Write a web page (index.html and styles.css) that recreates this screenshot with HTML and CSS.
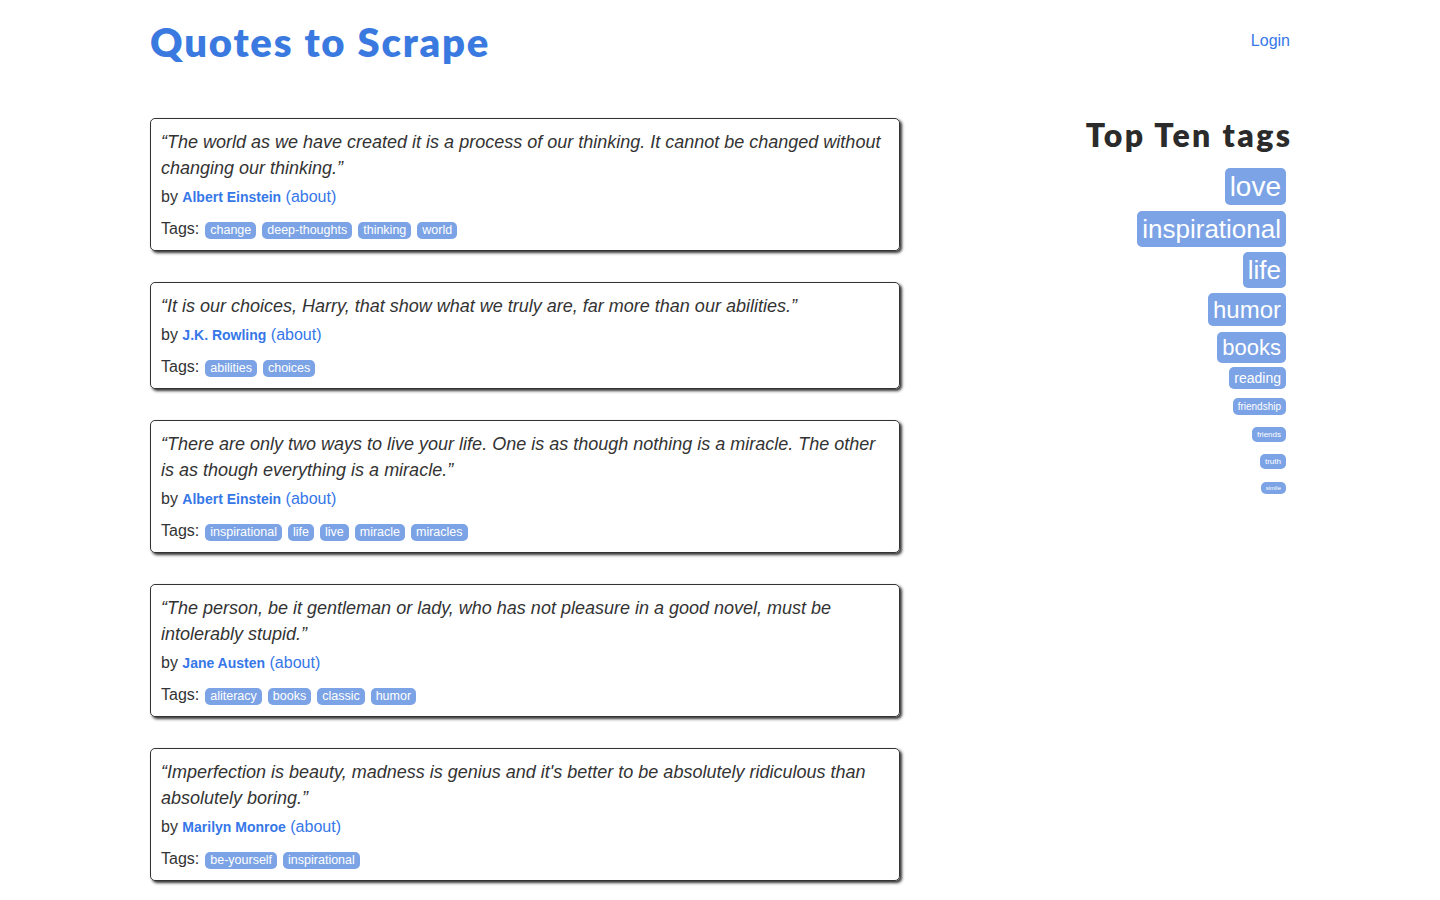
FILE: index.html
```html
<!DOCTYPE html>
<html lang="en">
<head>
<meta charset="UTF-8">
<title>Quotes to Scrape</title>
<link rel="stylesheet" href="styles.css">
</head>
<body>
<div class="container">
  <header class="header-box">
    <h1 class="brand"><a href="#">Quotes to Scrape</a></h1>
    <a class="login" href="#">Login</a>
  </header>
  <div class="row">
    <main class="quotes">
      <div class="quote">
        <span class="text">“The world as we have created it is a process of our thinking. It cannot be changed without changing our thinking.”</span>
        <span class="by">by <small class="author">Albert Einstein</small> <a href="#">(about)</a></span>
        <div class="tags">Tags:<a class="tag" href="#">change</a><a class="tag" href="#">deep-thoughts</a><a class="tag" href="#">thinking</a><a class="tag" href="#">world</a></div>
      </div>
      <div class="quote">
        <span class="text">“It is our choices, Harry, that show what we truly are, far more than our abilities.”</span>
        <span class="by">by <small class="author">J.K. Rowling</small> <a href="#">(about)</a></span>
        <div class="tags">Tags:<a class="tag" href="#">abilities</a><a class="tag" href="#">choices</a></div>
      </div>
      <div class="quote">
        <span class="text">“There are only two ways to live your life. One is as though nothing is a miracle. The other is as though everything is a miracle.”</span>
        <span class="by">by <small class="author">Albert Einstein</small> <a href="#">(about)</a></span>
        <div class="tags">Tags:<a class="tag" href="#">inspirational</a><a class="tag" href="#">life</a><a class="tag" href="#">live</a><a class="tag" href="#">miracle</a><a class="tag" href="#">miracles</a></div>
      </div>
      <div class="quote">
        <span class="text">“The person, be it gentleman or lady, who has not pleasure in a good novel, must be intolerably stupid.”</span>
        <span class="by">by <small class="author">Jane Austen</small> <a href="#">(about)</a></span>
        <div class="tags">Tags:<a class="tag" href="#">aliteracy</a><a class="tag" href="#">books</a><a class="tag" href="#">classic</a><a class="tag" href="#">humor</a></div>
      </div>
      <div class="quote">
        <span class="text">“Imperfection is beauty, madness is genius and it's better to be absolutely ridiculous than absolutely boring.”</span>
        <span class="by">by <small class="author">Marilyn Monroe</small> <a href="#">(about)</a></span>
        <div class="tags">Tags:<a class="tag" href="#">be-yourself</a><a class="tag" href="#">inspirational</a></div>
      </div>
    </main>
    <aside class="tags-box">
      <h2>Top Ten tags</h2>
      <span class="tag-item"><a class="tag" style="font-size: 28px" href="#">love</a></span>
      <span class="tag-item"><a class="tag" style="font-size: 26px" href="#">inspirational</a></span>
      <span class="tag-item"><a class="tag" style="font-size: 26px" href="#">life</a></span>
      <span class="tag-item"><a class="tag" style="font-size: 24px" href="#">humor</a></span>
      <span class="tag-item"><a class="tag" style="font-size: 22px" href="#">books</a></span>
      <span class="tag-item"><a class="tag" style="font-size: 14px" href="#">reading</a></span>
      <span class="tag-item"><a class="tag" style="font-size: 10px" href="#">friendship</a></span>
      <span class="tag-item"><a class="tag" style="font-size: 8px" href="#">friends</a></span>
      <span class="tag-item"><a class="tag" style="font-size: 8px" href="#">truth</a></span>
      <span class="tag-item"><a class="tag" style="font-size: 6px" href="#">simile</a></span>
    </aside>
  </div>
</div>
</body>
</html>
```
FILE: styles.css
```css
* { box-sizing: border-box; }
html, body { margin: 0; padding: 0; background: #fff; }
body {
  font-family: "Liberation Sans", Arial, Helvetica, sans-serif;
  font-size: 16px;
  line-height: 1.42857;
  color: #333333;
}
a { color: #3677e8; text-decoration: none; }

.container {
  width: 1140px;
  margin: 0 auto;
}

.header-box {
  display: flex;
  justify-content: space-between;
  align-items: flex-start;
  padding-top: 20px;
  margin-bottom: 54px;
}
.brand {
  margin: 0;
  font-family: Lato, "Open Sans", sans-serif;
  font-weight: 800;
  font-size: 40px;
  line-height: 44px;
}
.brand a { color: #3a7ae0; letter-spacing: 1.8px; }
.login {
  margin-top: 9px;
  font-size: 16px;
  line-height: 23px;
}

.row {
  display: flex;
  justify-content: space-between;
  align-items: flex-start;
}
.quotes { width: 750px; }

.quote {
  padding: 10px;
  margin-bottom: 31px;
  border: 1px solid #333333;
  border-radius: 5px;
  box-shadow: 2px 2px 3px #333333;
}
.quote .text {
  display: block;
  font-size: 18px;
  line-height: 26px;
  font-style: italic;
  margin-bottom: 5px;
}
.quote .by {
  display: block;
  line-height: 22px;
  margin-bottom: 9px;
}
.quote .author {
  font-size: 14px;
  font-weight: 700;
  color: #3677e8;
}
.quote .tags {
  height: 23px;
  line-height: 23px;
}
.quote .tags .tag {
  margin-left: 6px;
  padding: 1px 5px 2px;
  border-radius: 5px;
  font-size: 12.5px;
  color: #fff;
  background-color: #7ca3e5;
}

.tags-box {
  width: 360px;
  text-align: right;
}
.tags-box h2 {
  margin: 0 -2.4px 15px 0;
  font-family: Lato, "Open Sans", sans-serif;
  font-weight: 800;
  font-size: 32px;
  line-height: 34px;
  letter-spacing: 2.4px;
  color: #2b2b2b;
}
.tag-item {
  display: block;
  margin: 4px;
}
.tags-box .tag {
  padding: 3px 5px;
  border-radius: 5px;
  color: #fff;
  background-color: #7ca3e5;
}
```
